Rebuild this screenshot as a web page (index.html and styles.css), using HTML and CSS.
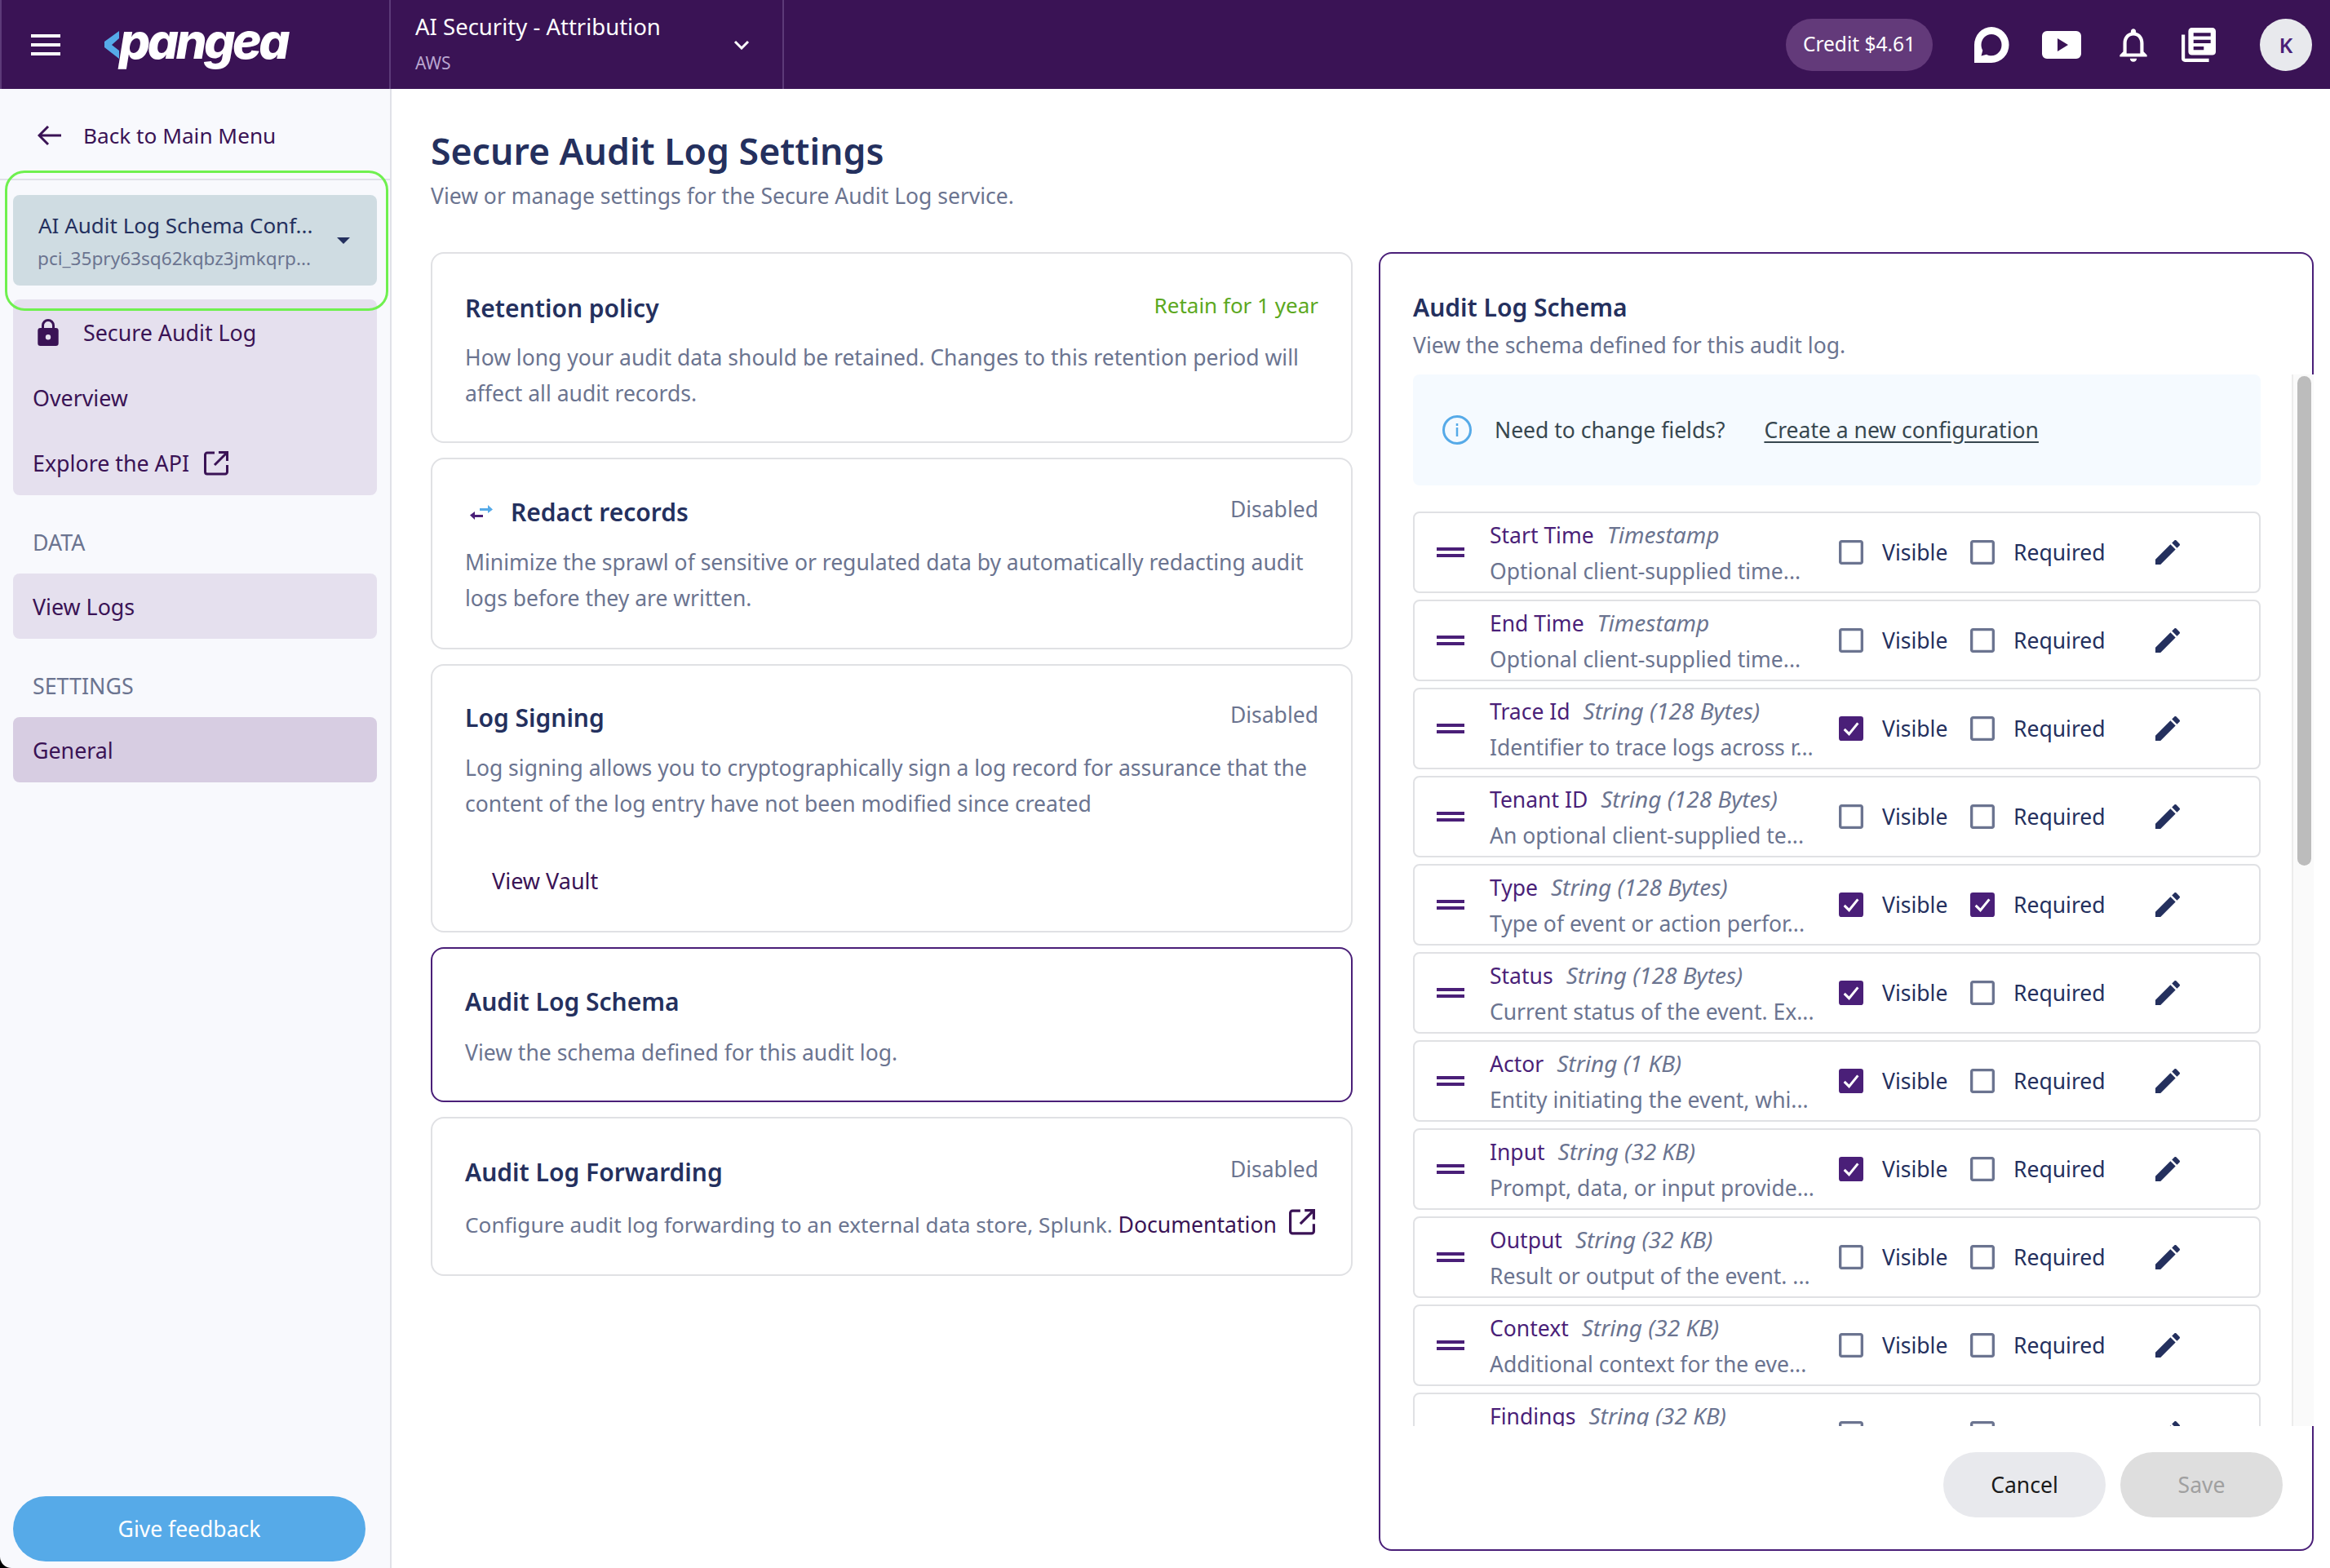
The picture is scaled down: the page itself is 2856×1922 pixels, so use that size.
FILE: index.html
```html
<!DOCTYPE html>
<html lang="en">
<head>
  <meta charset="utf-8" />
  <title>Secure Audit Log Settings</title>
  <link rel="stylesheet" href="styles.css">
</head>
<body>
  <svg class="sprites" width="0" height="0">
    <symbol id="i-edit" viewBox="0 0 24 24"><path d="M3 17.25V21h3.75L17.81 9.94l-3.75-3.75L3 17.25zM20.71 7.04c.39-.39.39-1.02 0-1.41l-2.34-2.34c-.39-.39-1.02-.39-1.41 0l-1.83 1.83 3.75 3.75 1.83-1.83z"/></symbol>
    <symbol id="i-off" viewBox="0 0 24 24"><path d="M19 5v14H5V5h14m0-2H5c-1.1 0-2 .9-2 2v14c0 1.1.9 2 2 2h14c1.1 0 2-.9 2-2V5c0-1.1-.9-2-2-2z"/></symbol>
    <symbol id="i-on" viewBox="0 0 24 24"><rect x="3" y="3" width="18" height="18" rx="2"/><path d="M7 12.500l3.500 3.500L17 8" fill="none" stroke="#fff" stroke-width="1.800"/></symbol>
    <symbol id="i-open" viewBox="0 0 30 30"><path d="M13 2H4a2.500 2.500 0 0 0-2.500 2.500v21A2.500 2.500 0 0 0 4 28h22a2.500 2.500 0 0 0 2.500-2.500V17M18 1.500h10.500V12M28 2 13 17" fill="none" stroke="currentColor" stroke-width="3"/></symbol>
  </svg>

  <header class="topbar">
    <div class="topbar-brand">
      <div class="hamburger"><span></span><span></span><span></span></div>
      <div class="logo">
        <svg class="logo-mark" viewBox="0 0 18 34"><path d="M18 0 0 13v7l18 14V24l-9-7 9-8z"/></svg>
        <span>pangea</span>
      </div>
    </div>
    <div class="project">
      <div>
        <div class="project-name">AI Security - Attribution</div>
        <div class="project-cloud">AWS</div>
      </div>
      <svg class="project-caret" viewBox="0 0 20 12"><path d="M2 2l8 8 8-8" fill="none" stroke="#fff" stroke-width="3"/></svg>
    </div>
    <div class="topbar-tools">
      <div class="credit">Credit $4.61</div>
      <svg class="tool tool-chat" viewBox="0 0 44 46"><path fill-rule="evenodd" d="M22 1a21.500 22 0 0 1 0 44H1V23A21.500 22 0 0 1 22 1zm0 9c-7 0-12.500 5.800-12.500 13 0 2.500.6 4.800 1.800 6.800L9.500 36.500l6.500-1.800c1.800 1 3.800 1.500 6 1.500 7 0 12.500-5.900 12.500-13.200S29 10 22 10z"/></svg>
      <svg class="tool tool-video" viewBox="0 0 48 34"><path fill-rule="evenodd" d="M6 0h36a6 6 0 0 1 6 6v22a6 6 0 0 1-6 6H6a6 6 0 0 1-6-6V6a6 6 0 0 1 6-6zm13 9v16l13-8z"/></svg>
      <svg class="tool tool-bell" viewBox="0 0 24 24"><path d="M12 22c1.100 0 2-.9 2-2h-4c0 1.100.89 2 2 2zm6-6v-5c0-3.070-1.640-5.640-4.500-6.320V4c0-.83-.67-1.500-1.500-1.500s-1.500.67-1.500 1.500v.68C7.630 5.360 6 7.920 6 11v5l-2 2v1h16v-1l-2-2zm-2 1H8v-6c0-2.480 1.510-4.500 4-4.500s4 2.020 4 4.500v6z"/></svg>
      <svg class="tool tool-docs" viewBox="2 2 20 20"><path d="M4 6H2v14c0 1.100.9 2 2 2h14v-2H4V6zm16-4H8c-1.100 0-2 .9-2 2v12c0 1.100.9 2 2 2h12c1.100 0 2-.9 2-2V4c0-1.100-.9-2-2-2zm-1 9H9V9h10v2zm-4 4H9v-2h6v2zm4-8H9V5h10v2z"/></svg>
      <div class="avatar">K</div>
    </div>
  </header>

  <div class="layout">
    <aside class="sidebar">
      <div class="back-row">
        <svg class="back-arrow" viewBox="0 0 30 26"><path d="M13 2 2 13l11 11M2 13h27" fill="none" stroke="currentColor" stroke-width="3"/></svg>
        <span>Back to Main Menu</span>
      </div>
      <div class="config-wrap">
        <div class="config">
          <div class="config-text">
            <div class="config-name">AI Audit Log Schema Conf...</div>
            <div class="config-id">pci_35pry63sq62kqbz3jmkqrp...</div>
          </div>
          <span class="config-caret"></span>
        </div>
      </div>
      <div class="highlight"></div>
      <nav class="nav-group">
        <div class="nav-item nav-service">
          <svg class="lock" viewBox="0 0 26 33"><path fill-rule="evenodd" d="M22.500 11H21V8A8 8 0 0 0 5 8v3H3.500A3.300 3.300 0 0 0 .3 14.300v15.400A3.300 3.300 0 0 0 3.500 33h19a3.300 3.300 0 0 0 3.200-3.300V14.300a3.300 3.300 0 0 0-3.200-3.300zM8 8a5 5 0 0 1 10 0v3H8zm5 17.500a3.200 3.200 0 1 1 0-6.400 3.200 3.200 0 0 1 0 6.400z"/></svg>
          <span>Secure Audit Log</span>
        </div>
        <div class="nav-item">Overview</div>
        <div class="nav-item nav-api">Explore the API <svg class="open-icon"><use href="#i-open"/></svg></div>
      </nav>
      <div class="nav-label">DATA</div>
      <nav class="nav-group"><div class="nav-item">View Logs</div></nav>
      <div class="nav-label">SETTINGS</div>
      <nav class="nav-group nav-active"><div class="nav-item">General</div></nav>
      <button class="feedback">Give feedback</button>
    </aside>

    <main class="content">
      <h1>Secure Audit Log Settings</h1>
      <p class="lead">View or manage settings for the Secure Audit Log service.</p>

      <div class="columns">
        <div class="cards">
          <section class="card card-retention">
            <div class="card-head"><h2>Retention policy</h2><span class="status status-on">Retain for 1 year</span></div>
            <p>How long your audit data should be retained. Changes to this retention period will affect all audit records.</p>
          </section>
          <section class="card card-redact">
            <div class="card-head">
              <h2 class="with-icon">
                <svg class="redact-icon" viewBox="0 0 28 20"><path d="M12 5h10V1l6 5.500-6 4.500V8H12z" fill="#56aae8"/><path d="M16 13H6v-4L0 13.500 6 19v-3h10z" fill="#4a1f78"/></svg>
                Redact records
              </h2>
              <span class="status">Disabled</span>
            </div>
            <p>Minimize the sprawl of sensitive or regulated data by automatically redacting audit logs before they are written.</p>
          </section>
          <section class="card card-signing">
            <div class="card-head"><h2>Log Signing</h2><span class="status">Disabled</span></div>
            <p>Log signing allows you to cryptographically sign a log record for assurance that the content of the log entry have not been modified since created</p>
            <a class="vault">View Vault</a>
          </section>
          <section class="card card-schema">
            <div class="card-head"><h2>Audit Log Schema</h2></div>
            <p>View the schema defined for this audit log.</p>
          </section>
          <section class="card card-forward">
            <div class="card-head"><h2>Audit Log Forwarding</h2><span class="status">Disabled</span></div>
            <p class="forward-text">Configure audit log forwarding to an external data store, Splunk. <a class="doc-link">Documentation <svg class="open-icon"><use href="#i-open"/></svg></a></p>
          </section>
        </div>

        <section class="panel">
          <h2>Audit Log Schema</h2>
          <p class="panel-sub">View the schema defined for this audit log.</p>
          <div class="panel-scroll">
            <div class="panel-list">
              <div class="notice">
                <svg class="info" viewBox="0 0 36 36"><circle cx="18" cy="18" r="16.500" fill="none" stroke="#56aae8" stroke-width="3"/><path d="M18 15v11M18 10v3" stroke="#56aae8" stroke-width="2.500"/></svg>
                <span>Need to change fields?</span>
                <a>Create a new configuration</a>
              </div>

              <div class="field">
                <div class="grip"></div>
                <div class="field-text"><div class="field-name"><b>Start Time</b><i>Timestamp</i></div><div class="field-desc">Optional client-supplied time...</div></div>
                <label class="check"><svg><use href="#i-off"/></svg>Visible</label>
                <label class="check check-req"><svg><use href="#i-off"/></svg>Required</label>
                <svg class="edit"><use href="#i-edit"/></svg>
              </div>
              <div class="field">
                <div class="grip"></div>
                <div class="field-text"><div class="field-name"><b>End Time</b><i>Timestamp</i></div><div class="field-desc">Optional client-supplied time...</div></div>
                <label class="check"><svg><use href="#i-off"/></svg>Visible</label>
                <label class="check check-req"><svg><use href="#i-off"/></svg>Required</label>
                <svg class="edit"><use href="#i-edit"/></svg>
              </div>
              <div class="field">
                <div class="grip"></div>
                <div class="field-text"><div class="field-name"><b>Trace Id</b><i>String (128 Bytes)</i></div><div class="field-desc">Identifier to trace logs across r...</div></div>
                <label class="check"><svg class="on"><use href="#i-on"/></svg>Visible</label>
                <label class="check check-req"><svg><use href="#i-off"/></svg>Required</label>
                <svg class="edit"><use href="#i-edit"/></svg>
              </div>
              <div class="field">
                <div class="grip"></div>
                <div class="field-text"><div class="field-name"><b>Tenant ID</b><i>String (128 Bytes)</i></div><div class="field-desc">An optional client-supplied te...</div></div>
                <label class="check"><svg><use href="#i-off"/></svg>Visible</label>
                <label class="check check-req"><svg><use href="#i-off"/></svg>Required</label>
                <svg class="edit"><use href="#i-edit"/></svg>
              </div>
              <div class="field">
                <div class="grip"></div>
                <div class="field-text"><div class="field-name"><b>Type</b><i>String (128 Bytes)</i></div><div class="field-desc">Type of event or action perfor...</div></div>
                <label class="check"><svg class="on"><use href="#i-on"/></svg>Visible</label>
                <label class="check check-req"><svg class="on"><use href="#i-on"/></svg>Required</label>
                <svg class="edit"><use href="#i-edit"/></svg>
              </div>
              <div class="field">
                <div class="grip"></div>
                <div class="field-text"><div class="field-name"><b>Status</b><i>String (128 Bytes)</i></div><div class="field-desc">Current status of the event. Ex...</div></div>
                <label class="check"><svg class="on"><use href="#i-on"/></svg>Visible</label>
                <label class="check check-req"><svg><use href="#i-off"/></svg>Required</label>
                <svg class="edit"><use href="#i-edit"/></svg>
              </div>
              <div class="field">
                <div class="grip"></div>
                <div class="field-text"><div class="field-name"><b>Actor</b><i>String (1 KB)</i></div><div class="field-desc">Entity initiating the event, whi...</div></div>
                <label class="check"><svg class="on"><use href="#i-on"/></svg>Visible</label>
                <label class="check check-req"><svg><use href="#i-off"/></svg>Required</label>
                <svg class="edit"><use href="#i-edit"/></svg>
              </div>
              <div class="field">
                <div class="grip"></div>
                <div class="field-text"><div class="field-name"><b>Input</b><i>String (32 KB)</i></div><div class="field-desc">Prompt, data, or input provide...</div></div>
                <label class="check"><svg class="on"><use href="#i-on"/></svg>Visible</label>
                <label class="check check-req"><svg><use href="#i-off"/></svg>Required</label>
                <svg class="edit"><use href="#i-edit"/></svg>
              </div>
              <div class="field">
                <div class="grip"></div>
                <div class="field-text"><div class="field-name"><b>Output</b><i>String (32 KB)</i></div><div class="field-desc">Result or output of the event. ...</div></div>
                <label class="check"><svg><use href="#i-off"/></svg>Visible</label>
                <label class="check check-req"><svg><use href="#i-off"/></svg>Required</label>
                <svg class="edit"><use href="#i-edit"/></svg>
              </div>
              <div class="field">
                <div class="grip"></div>
                <div class="field-text"><div class="field-name"><b>Context</b><i>String (32 KB)</i></div><div class="field-desc">Additional context for the eve...</div></div>
                <label class="check"><svg><use href="#i-off"/></svg>Visible</label>
                <label class="check check-req"><svg><use href="#i-off"/></svg>Required</label>
                <svg class="edit"><use href="#i-edit"/></svg>
              </div>
              <div class="field">
                <div class="grip"></div>
                <div class="field-text"><div class="field-name"><b>Findings</b><i>String (32 KB)</i></div></div>
                <label class="check"><svg><use href="#i-off"/></svg></label>
                <label class="check check-req"><svg><use href="#i-off"/></svg></label>
                <svg class="edit"><use href="#i-edit"/></svg>
              </div>
            </div>
            <div class="scrollbar"><div class="scrollbar-thumb"></div></div>
          </div>
          <div class="panel-actions">
            <button class="btn btn-cancel">Cancel</button>
            <button class="btn btn-save" disabled>Save</button>
          </div>
        </section>
      </div>
    </main>
  </div>
</body>
</html>
```
FILE: styles.css
```css
* {
  box-sizing: border-box;
}

body {
  font-family: "Noto Sans", sans-serif;
  background-color: #000;
  color: #24305e;
  margin: 0;
  width: 2856px;
  height: 1922px;
  overflow: hidden;
  display: flex;
  flex-direction: column;
}

.sprites {
  display: none;
}

/* top bar */
.topbar {
  height: 109px;
  flex: none;
  background-color: #3a1355;
  color: #fff;
  display: flex;
}

.topbar-brand {
  width: 479px;
  border-right: 2px solid #5c3a78;
  border-left: 2px solid #5c3a78;
  display: flex;
  align-items: center;
  padding-left: 36px;
}

.hamburger {
  width: 36px;
  display: flex;
  flex-direction: column;
  gap: 7px;
}

.hamburger span {
  height: 4px;
  background-color: #fff;
}

.logo {
  margin-left: 54px;
  display: flex;
  align-items: center;
  font-family: Inter, sans-serif;
  font-weight: 800;
  font-style: italic;
  font-size: 60px;
  letter-spacing: -3.500px;
  line-height: 1;
  margin-top: -9px;
}

.logo-mark {
  width: 18px;
  height: 34px;
  fill: #56aae8;
  margin-top: 9px;
}

.project {
  width: 482px;
  border-right: 2px solid #5c3a78;
  padding: 0 40px 0 30px;
  display: flex;
  align-items: center;
  justify-content: space-between;
}

.project-name {
  font-size: 27.500px;
  line-height: 40px;
  margin-top: -4px;
}

.project-cloud {
  font-size: 21px;
  line-height: 30px;
  margin-top: 9px;
  color: #b9a6d0;
}

.project-caret {
  width: 20px;
  height: 12px;
}

.topbar-tools {
  flex: 1;
  display: flex;
  align-items: center;
  justify-content: flex-end;
  padding-right: 22px;
}

.credit {
  width: 180px;
  height: 64px;
  border-radius: 32px;
  background-color: #633a7a;
  font-size: 24.500px;
  padding-bottom: 2px;
  display: flex;
  align-items: center;
  justify-content: center;
  margin-right: 49px;
}

.tool {
  fill: #fff;
  flex: none;
}

.tool-chat {
  width: 46px;
  height: 46px;
  margin-right: 39px;
}

.tool-video {
  width: 48px;
  height: 34px;
  margin-right: 39px;
}

.tool-bell {
  width: 50px;
  height: 50px;
  margin-right: 34px;
}

.tool-docs {
  width: 42px;
  height: 42px;
  margin-right: 54px;
}

.avatar {
  width: 64px;
  height: 64px;
  border-radius: 50%;
  background-color: #e8e9ed;
  color: #4a1f78;
  font-size: 26px;
  font-weight: 600;
  display: flex;
  align-items: center;
  justify-content: center;
}

.layout {
  flex: 1;
  display: flex;
  min-height: 0;
}

/* sidebar */
.sidebar {
  width: 480px;
  flex: none;
  background-color: #f8f9fd;
  border-right: 2px solid #e0e1e8;
  border-bottom-left-radius: 14px;
  color: #3a1355;
  padding: 0 16px;
  display: flex;
  flex-direction: column;
  position: relative;
  font-size: 26.800px;
}

.back-row {
  height: 112px;
  margin: 0 -16px;
  padding: 3px 0 0 46px;
  display: flex;
  align-items: center;
  gap: 26px;
  border-bottom: 2px solid #e0e1e8;
  font-size: 26.200px;
}

.back-arrow {
  width: 30px;
  height: 26px;
  flex: none;
}

.config-wrap {
  padding: 18px 0 17px;
}

.config {
  height: 111px;
  border-radius: 8px;
  background-color: #cfdce2;
  display: flex;
  align-items: center;
  padding: 0 33px 0 30px;
}

.config-text {
  flex: 1;
}

.config-name {
  font-size: 26px;
  line-height: 36px;
  padding-left: 1px;
  color: #24305e;
  white-space: nowrap;
}

.config-id {
  font-size: 22.600px;
  line-height: 30px;
  margin-top: 8px;
  color: #6b7490;
  white-space: nowrap;
}

.config-caret {
  border-left: 8px solid transparent;
  border-right: 8px solid transparent;
  border-top: 8px solid #24305e;
}

/* green focus ring round the selector */
.highlight {
  position: absolute;
  left: 6px;
  top: 100px;
  width: 470px;
  height: 172px;
  border: 3px solid #6ff04f;
  border-radius: 24px;
  pointer-events: none;
}

.nav-group {
  border-radius: 8px;
  background-color: #e5e0ee;
}

.nav-active {
  background-color: #d7cde2;
}

.nav-item {
  height: 80px;
  padding: 1px 0 0 24px;
  display: flex;
  align-items: center;
}

.nav-service {
  padding-left: 30px;
  gap: 30px;
}

.lock {
  width: 26px;
  height: 33px;
  margin-top: -1px;
  fill: #3a1355;
  flex: none;
}

.nav-api {
  gap: 18px;
}

.open-icon {
  width: 30px;
  height: 30px;
  flex: none;
}

.nav-label {
  height: 96px;
  padding: 18px 0 0 24px;
  display: flex;
  align-items: center;
  color: #6b7490;
}

.feedback {
  margin-top: auto;
  margin-bottom: 8px;
  width: 432px;
  height: 80px;
  border: none;
  border-radius: 40px;
  background-color: #56aae8;
  color: #fff;
  font-family: inherit;
  font-size: 26.500px;
}

/* main content */
.content {
  flex: 1;
  background-color: #fff;
  padding: 0 20px 21px 48px;
  display: flex;
  flex-direction: column;
  min-width: 0;
}

h1 {
  font-size: 44.600px;
  font-weight: 600;
  line-height: 60px;
  margin: 46px 0 0;
}

.lead {
  font-size: 26.500px;
  line-height: 36px;
  margin: 7px 0 0;
  color: #6b7490;
}

.columns {
  flex: 1;
  min-height: 0;
  margin-top: 51px;
  display: flex;
  gap: 32px;
}

.cards {
  width: 1130px;
  flex: none;
  display: flex;
  flex-direction: column;
  gap: 18px;
}

.card {
  border: 2px solid #e0e1e4;
  border-radius: 16px;
  padding: 0 40px;
}

.card-retention { height: 234px; padding-top: 47px; }
.card-redact { height: 235px; padding-top: 45px; }
.card-signing { height: 329px; padding-top: 44px; }
.card-schema { height: 190px; padding-top: 45px; border-color: #4a1f78; }
.card-forward { height: 195px; padding-top: 46px; }

.card-head {
  display: flex;
  justify-content: space-between;
  align-items: center;
  height: 40px;
}

.card h2,
.panel h2 {
  font-size: 30px;
  font-weight: 600;
  line-height: 40px;
  margin: 0;
}

.with-icon {
  display: flex;
  align-items: center;
  gap: 22px;
  padding-left: 6px;
}

.redact-icon {
  width: 28px;
  height: 20px;
}

.status {
  font-size: 26.500px;
  color: #6b7490;
  margin-top: -8px;
}

.status-on {
  font-size: 26px;
  color: #5ca81e;
}

.card p {
  font-size: 26.500px;
  line-height: 44px;
  color: #6b7490;
  margin: 18px 0 0;
}

.card-redact p,
.card-signing p {
  margin-top: 19px;
}

.card-schema p {
  margin-top: 20px;
}

.vault {
  display: block;
  margin: 53px 0 0 33px;
  font-size: 27px;
  line-height: 40px;
  color: #3a1355;
}

.card .forward-text {
  font-size: 26.200px;
  margin-top: 22px;
  white-space: nowrap;
}

.doc-link {
  font-size: 26.600px;
  color: #3a1355;
}

.doc-link .open-icon {
  width: 32px;
  height: 32px;
  vertical-align: -3px;
  margin-left: 8px;
}

/* schema panel */
.panel {
  width: 1146px;
  flex: none;
  border: 2px solid #4a1f78;
  border-radius: 16px;
  padding: 46px 0 0 40px;
  display: flex;
  flex-direction: column;
}

.panel-sub {
  font-size: 26.500px;
  line-height: 36px;
  color: #6b7490;
  margin: 8px 0 0;
}

.panel-scroll {
  height: 1289px;
  margin-top: 18px;
  display: flex;
  flex: none;
}

.panel-list {
  width: 1077px;
  padding-right: 38px;
  overflow: hidden;
  flex: none;
}

.scrollbar {
  width: 27px;
  flex: none;
  background-color: #fafafa;
  border-left: 2px solid #ececec;
  padding: 2px 3px 0 5px;
}

.scrollbar-thumb {
  height: 600px;
  border-radius: 9px;
  background-color: #bcbcbc;
}

.notice {
  height: 136px;
  margin-bottom: 32px;
  border-radius: 8px;
  background-color: #f5faff;
  display: flex;
  align-items: center;
  padding-left: 36px;
  font-size: 26.500px;
  color: #37474f;
}

.info {
  width: 36px;
  height: 36px;
  margin-right: 28px;
  flex: none;
}

.notice a {
  margin-left: 48px;
  text-decoration: underline;
  text-underline-offset: 4px;
}

.field {
  height: 100px;
  margin-bottom: 8px;
  border: 2px solid #e0e1e4;
  border-radius: 8px;
  display: flex;
  align-items: center;
  padding-left: 27px;
}

.grip {
  width: 34px;
  height: 12px;
  flex: none;
  border-top: 4px solid #4a1f78;
  border-bottom: 4px solid #4a1f78;
}

.field-text {
  width: 388px;
  height: 84px;
  margin: 4px 0 0 31px;
  flex: none;
}

.field-name {
  font-size: 26.500px;
  line-height: 36px;
  white-space: nowrap;
}

.field-name b {
  font-weight: 400;
  color: #4a1f78;
  margin-right: 16px;
}

.field-name i {
  font-size: 28px;
  color: #6b7490;
}

.field-desc {
  font-size: 26.500px;
  line-height: 36px;
  margin-top: 8px;
  color: #6b7490;
  white-space: nowrap;
}

.check {
  width: 161px;
  height: 46px;
  flex: none;
  display: flex;
  align-items: center;
  font-size: 26.500px;
  margin-left: 40px;
  gap: 18px;
}

.check-req {
  width: 222px;
  margin-left: 0;
}

.check svg {
  width: 40px;
  height: 40px;
  fill: #6b7490;
  margin-left: -5px;
  flex: none;
}

.check svg.on {
  fill: #4a1f78;
}

.edit {
  width: 40px;
  height: 40px;
  fill: #24305e;
  flex: none;
}

.panel-actions {
  display: flex;
  justify-content: flex-end;
  gap: 18px;
  padding: 32px 36px 0 0;
}

.btn {
  width: 199px;
  height: 80px;
  border: none;
  border-radius: 40px;
  font-family: inherit;
  font-size: 26.500px;
}

.btn-cancel {
  background-color: #e8e9ed;
  color: #1a1a1a;
}

.btn-save {
  background-color: #dedede;
  color: #a0a0a0;
}
```
